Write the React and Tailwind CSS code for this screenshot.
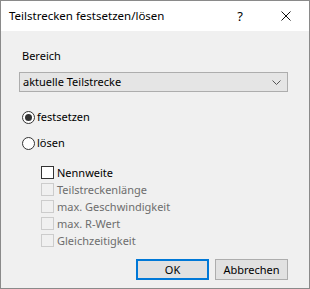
import React from "react";

const Radio = ({ checked, label }) => (
  <div className="flex items-center h-[14px]">
    <span className="w-[13px] h-[13px] rounded-full border border-[#333333] bg-white flex items-center justify-center">
      {checked && <span className="w-[7px] h-[7px] rounded-full bg-[#333333]"></span>}
    </span>
    <span className="ml-[2px] text-black">{label}</span>
  </div>
);

const Check = ({ label, disabled }) => (
  <div className="flex items-center h-[17px]">
    <span
      className={
        disabled
          ? "w-[13px] h-[13px] border border-[#cccccc] bg-[#f0f0f0]"
          : "w-[13px] h-[13px] border border-[#333333] bg-white"
      }
    ></span>
    <span className={disabled ? "ml-[3px] text-[#6d6d6d]" : "ml-[3px] text-black"}>{label}</span>
  </div>
);

export default function App() {
  return (
    <div
      className="w-[310px] h-[289px] border border-[#8a8a8a] bg-[#f0f0f0] flex flex-col text-[11px] leading-[16px]"
      style={{ fontFamily: "'Noto Sans', 'Open Sans', sans-serif" }}
    >
      {/* title bar */}
      <div className="h-[30px] bg-white flex items-center pl-[8px] shrink-0">
        <span className="text-black flex-1 text-[11.5px]">Teilstrecken festsetzen/lösen</span>
        <span className="w-[46px] text-center text-[13px]">?</span>
        <span className="w-[46px] flex justify-center">
          <svg width="10" height="10" viewBox="0 0 10 10">
            <path d="M0.5 0.5L9.5 9.5M9.5 0.5L0.5 9.5" stroke="#111" strokeWidth="1" />
          </svg>
        </span>
      </div>

      <div className="flex flex-col pl-[21px] pr-[21px]">
        <div className="mt-[17px] h-[16px] text-black">Bereich</div>

        <div className="mt-[8px] -ml-[3px] h-[20px] border border-[#adadad] bg-[#e5e5e5] flex items-center pl-[3px] pr-[6px]">
          <span className="flex-1 text-black">aktuelle Teilstrecke</span>
          <svg width="9" height="5" viewBox="0 0 9 5">
            <path d="M0.5 0.5L4.5 4.5L8.5 0.5" stroke="#555" strokeWidth="1" fill="none" />
          </svg>
        </div>

        <div className="mt-[18px]">
          <Radio checked label="festsetzen" />
        </div>
        <div className="mt-[12px]">
          <Radio label="lösen" />
        </div>

        <div className="mt-[14px] ml-[19px] flex flex-col">
          <Check label="Nennweite" />
          <Check label="Teilstreckenlänge" disabled />
          <Check label="max. Geschwindigkeit" disabled />
          <Check label="max. R-Wert" disabled />
          <Check label="Gleichzeitigkeit" disabled />
        </div>
      </div>

      <div className="mt-[10px] flex justify-end pr-[21px] gap-[6px]">
        <button className="w-[73px] h-[21px] border-2 border-[#0078d7] bg-[#e1e1e1] text-black">OK</button>
        <button className="w-[73px] h-[21px] border border-[#adadad] bg-[#e1e1e1] text-black">Abbrechen</button>
      </div>
    </div>
  );
}
